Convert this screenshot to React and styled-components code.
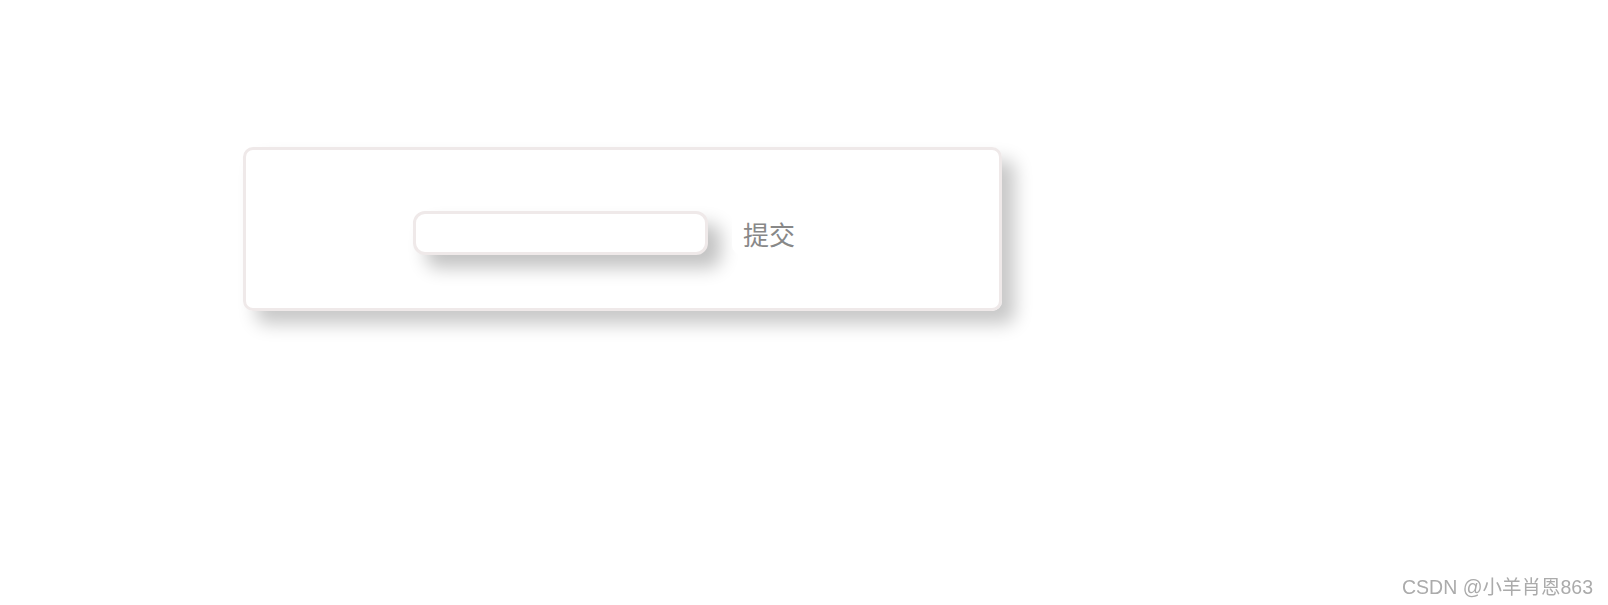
import styled, { createGlobalStyle } from "styled-components";

const GlobalStyle = createGlobalStyle`
  html, body {
    margin: 0;
    padding: 0;
    background: #fff;
    font-family: "Noto Sans CJK SC", "Liberation Sans", sans-serif;
  }
`;

const Page = styled.div`
  height: 605px;
  padding: 147px 0 0 243px;
  box-sizing: border-box;
`;

const Card = styled.form`
  width: 759px;
  height: 164px;
  box-sizing: border-box;
  border: 3px solid #efe9e9;
  border-radius: 10px;
  box-shadow: 13px 13px 18px rgba(0, 0, 0, 0.22);
  display: flex;
  align-items: center;
  padding: 8px 0 0 167px;
`;

const Input = styled.input`
  width: 295px;
  height: 44px;
  box-sizing: border-box;
  border: 3px solid #efe9e9;
  border-radius: 12px;
  box-shadow: 13px 13px 18px rgba(0, 0, 0, 0.24);
  outline: none;
  background: #fff;
`;

const Button = styled.button`
  margin-left: 24px;
  height: 44px;
  padding: 0 11px;
  border: none;
  border-radius: 10px;
  background: #fff;
  color: #888;
  font-family: "Noto Sans CJK SC", "Liberation Sans", sans-serif;
  font-size: 26px;
  cursor: pointer;
  position: relative;
`;

const Watermark = styled.div`
  position: fixed;
  right: 15px;
  bottom: 5px;
  font-family: "Liberation Sans", "Noto Sans CJK SC", sans-serif;
  font-size: 19.5px;
  color: #ababab;
`;

export default function App() {
  return (
    <Page>
      <GlobalStyle />
      <Card onSubmit={(e) => e.preventDefault()}>
        <Input type="text" />
        <Button type="submit">提交</Button>
      </Card>
      <Watermark>CSDN @小羊肖恩863</Watermark>
    </Page>
  );
}
